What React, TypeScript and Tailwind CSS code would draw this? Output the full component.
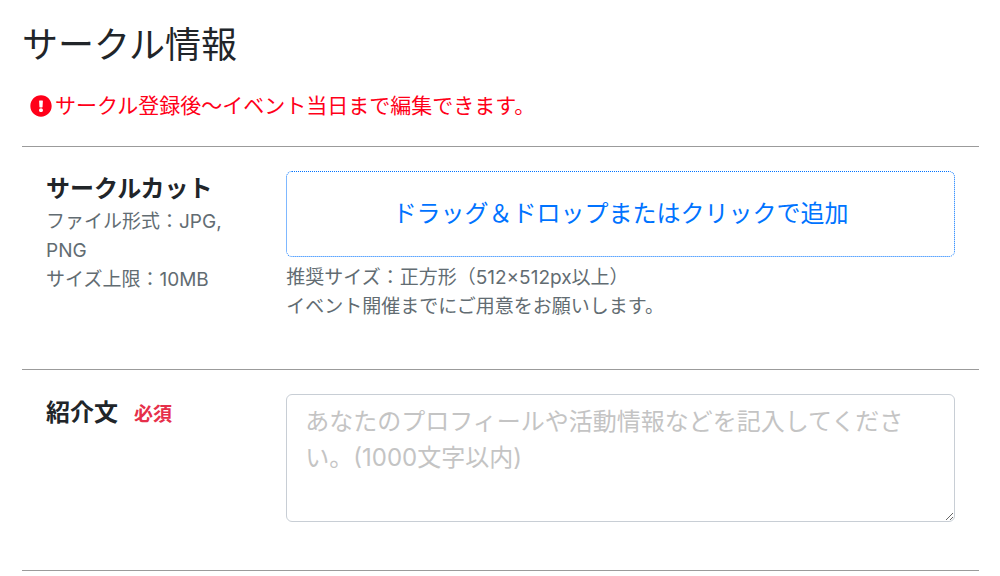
import { FaExclamationCircle } from "react-icons/fa";

export default function App() {
  return (
    <main className="pt-[23px] pr-[21px] pl-[22px] font-['Inter','Noto_Sans_CJK_JP',sans-serif] text-[#212529]">
      <h1 className="text-4xl leading-[44px] font-normal">サークル情報</h1>
      <p className="mt-[23px] flex items-center gap-[3px] pl-2 text-[21px] leading-8 text-[#ff0019]">
        <FaExclamationCircle className="size-[22px] shrink-0" aria-hidden="true" />
        サークル登録後〜イベント当日まで編集できます。
      </p>
      <form>
        <section className="mt-6 grid grid-cols-[1fr_3fr] border-t border-[#9b9b9b] pt-6 pb-12">
          <div className="px-6">
            <h2 id="cut-label" className="text-2xl leading-9 font-bold">サークルカット</h2>
            <p className="text-[19px] leading-[29px] text-[#626c72]">
              ファイル形式：JPG, PNG
              <br />
              サイズ上限：10MB
            </p>
          </div>
          <div className="pr-6 pl-[25px]">
            <button type="button" aria-describedby="cut-label" className="flex h-[86px] w-full items-center justify-center rounded-md border border-dotted border-[#0073ff] text-2xl text-[#0073ff]">
              ドラッグ＆ドロップまたはクリックで追加
            </button>
            <p className="mt-1.5 text-[19px] leading-[29px] text-[#626c72]">
              推奨サイズ：正方形（512×512px以上）
              <br />
              イベント開催までにご用意をお願いします。
            </p>
          </div>
        </section>
        <section className="grid grid-cols-[1fr_3fr] border-y border-[#9b9b9b] pt-6 pb-12">
          <label htmlFor="intro" className="flex items-baseline gap-4 self-start px-6 text-2xl leading-[38px] font-bold">
            紹介文
            <span className="text-[19px] text-[#e6304a]">必須</span>
          </label>
          <div className="pr-6 pl-[25px]">
            <textarea
              id="intro"
              required
              maxLength={1000}
              placeholder="あなたのプロフィールや活動情報などを記入してください。(1000文字以内)"
              className="block h-32 w-full resize rounded-md border border-[#c8ced5] px-[18px] py-[9px] text-2xl leading-9 placeholder:text-[#c4c4c4]"
            />
          </div>
        </section>
      </form>
    </main>
  );
}
